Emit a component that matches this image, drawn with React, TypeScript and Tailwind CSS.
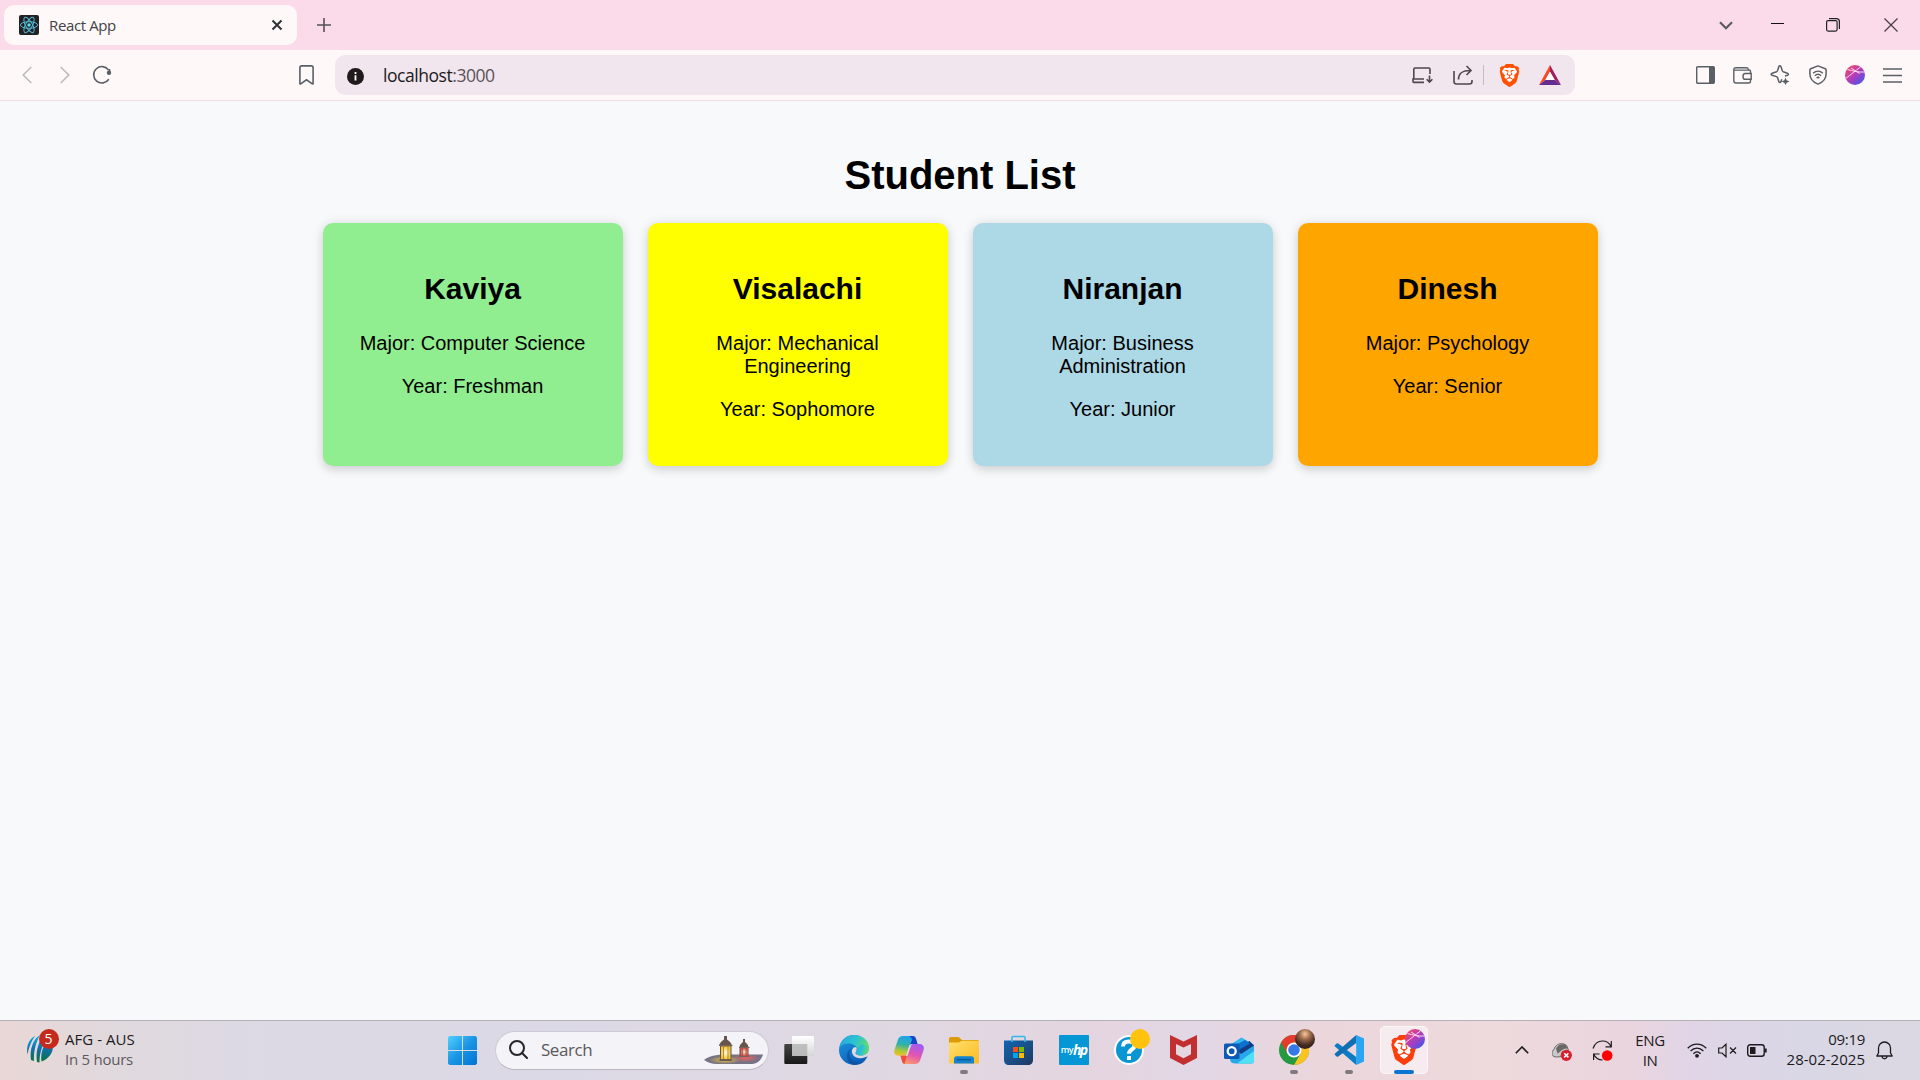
import React from "react";
import type { ReactNode } from "react";
import { SiBrave } from "react-icons/si";

const students = [
  { name: "Kaviya", major: "Computer Science", year: "Freshman", color: "bg-[#90ee90]" },
  { name: "Visalachi", major: "Mechanical Engineering", year: "Sophomore", color: "bg-[#ffff00]" },
  { name: "Niranjan", major: "Business Administration", year: "Junior", color: "bg-[#add8e6]" },
  { name: "Dinesh", major: "Psychology", year: "Senior", color: "bg-[#ffa500]" },
];

function Slot({ w, children }: { w: string; children?: ReactNode }) {
  return <div className={`flex h-full shrink-0 items-center justify-center ${w}`}>{children}</div>;
}

function ReactLogo() {
  return (
    <svg width="20" height="20" viewBox="0 0 20 20">
      <rect width="20" height="20" rx="2" fill="#222" />
      <g fill="none" stroke="#53b9d8" strokeWidth="1">
        <ellipse cx="10" cy="10" rx="8.6" ry="3.3" />
        <ellipse cx="10" cy="10" rx="8.6" ry="3.3" transform="rotate(60 10 10)" />
        <ellipse cx="10" cy="10" rx="8.6" ry="3.3" transform="rotate(120 10 10)" />
      </g>
      <circle cx="10" cy="10" r="1.7" fill="#61dafb" />
    </svg>
  );
}

function BraveLogo({ size, color = "#ff5000" }: { size: number; color?: string }) {
  return (
    <svg width={size} height={size} viewBox="0 0 24 24">
      <path d="M6 4h12l2 5-3 9-5 4-5-4-3-9z" fill="#fff" />
      <SiBrave size={24} color={color} />
    </svg>
  );
}

function Orb({ size }: { size: number }) {
  return (
    <svg width={size} height={size} viewBox="0 0 20 20">
      <defs>
        <linearGradient id="orb" x1="0.1" y1="0.1" x2="0.85" y2="0.9">
          <stop offset="0" stopColor="#f0486c" />
          <stop offset="0.5" stopColor="#b63cb8" />
          <stop offset="1" stopColor="#4a55e8" />
        </linearGradient>
      </defs>
      <circle cx="10" cy="10" r="10" fill="url(#orb)" />
      <path d="M2.500 4.500C8 6 13 7.500 19.600 7M.7 13.500C6 9.500 10 6 15.500 2M6 3l8.500 5.500" fill="none" stroke="#ffd9f4" strokeWidth="1" />
    </svg>
  );
}

function TabStrip() {
  return (
    <div className="flex h-[50px] items-center bg-[#fbdaea] pl-1">
      <div className="flex h-10 w-[293px] items-center rounded-[10px] bg-[#fff8f8] pl-[15px] pr-[14px]">
        <ReactLogo />
        <span className="mb-px ml-[10px] flex-1 text-[15px] leading-5 tracking-[-0.38px] text-[#404346]">React App</span>
        <svg width="12" height="12" viewBox="0 0 12 12" stroke="#2e3236" strokeWidth="2">
          <path d="M1.500 1.500l9 9M10.500 1.500l-9 9" />
        </svg>
      </div>
      <Slot w="w-[54px]">
        <svg width="14" height="14" viewBox="0 0 14 14" stroke="#55515a" strokeWidth="1.600">
          <path d="M7 0v14M0 7h14" />
        </svg>
      </Slot>
      <div className="flex-1" />
      <Slot w="w-[50px]">
        <svg width="14" height="9" viewBox="0 0 14 9" fill="none" stroke="#5c5961" strokeWidth="2.200">
          <path d="M1 1.200l6 6 6-6" />
        </svg>
      </Slot>
      <Slot w="w-[54px]">
        <span className="mb-[3px] mr-[2px] h-px w-[13px] bg-[#111]" />
      </Slot>
      <Slot w="w-[56px]">
        <svg width="14" height="14" viewBox="0 0 14 14" fill="none" stroke="#222">
          <rect x="0.600" y="2.600" width="10.500" height="10.500" rx="1.500" strokeWidth="1.200" />
          <path d="M3 .6h7.500a2.900 2.900 0 0 1 2.900 2.900V11" strokeWidth="1.200" />
        </svg>
      </Slot>
      <Slot w="w-[59px]">
        <svg width="14" height="14" viewBox="0 0 14 14" stroke="#4a3a44" strokeWidth="1.200">
          <path d="M.5.5l13 13M13.500.5l-13 13" />
        </svg>
      </Slot>
    </div>
  );
}

function Toolbar() {
  return (
    <div className="flex h-[51px] items-center border-b border-[#f3dbe2] bg-[#fff8f8]">
      <Slot w="w-[8px]" />
      <Slot w="w-[38px]">
        <svg width="10" height="18" viewBox="0 0 10 18" fill="none" stroke="#bcb8bb" strokeWidth="1.500">
          <path d="M9.300 1L1.200 9l8.100 8" />
        </svg>
      </Slot>
      <Slot w="w-[38px]">
        <svg width="10" height="18" viewBox="0 0 10 18" fill="none" stroke="#bcb8bb" strokeWidth="1.500">
          <path d="M.7 1l8.100 8-8.100 8" />
        </svg>
      </Slot>
      <Slot w="w-[36px]">
        <svg width="20" height="20" viewBox="0 0 20 20" fill="none" stroke="#5a5f66" strokeWidth="1.600">
          <path d="M16.800 14.200A8.200 8.200 0 1 1 16.600 5" />
          <circle cx="17" cy="7.800" r="2.200" fill="#5a5f66" stroke="none" />
          <path d="M17.500 4v4" />
        </svg>
      </Slot>
      <div className="w-[157px] shrink-0" />
      <Slot w="w-[58px]">
        <svg width="15" height="20" viewBox="0 0 15 20" fill="none" stroke="#5a5f66" strokeWidth="1.600">
          <path d="M.9 18.500V2.800c0-1.200.8-1.900 1.900-1.900h9.400c1.100 0 1.900.7 1.900 1.900v15.700c0 .5-.4.7-.8.4L7.500 14.800l-5.800 4.100c-.4.3-.8.1-.8-.4z" />
        </svg>
      </Slot>
      <div className="flex h-10 w-[1240px] shrink-0 items-center rounded-[10px] bg-[#f1e5ee]">
        <Slot w="w-[40px]">
          <svg className="mt-[2px]" width="17" height="17" viewBox="0 0 17 17">
            <circle cx="8.500" cy="8.500" r="8.500" fill="#201a1c" />
            <path d="M8.500 7.300v5.200M8.500 4v1.900" stroke="#fff" strokeWidth="1.800" />
          </svg>
        </Slot>
        <span className="mb-px ml-2 flex-1 text-[17.5px] leading-6 tracking-[-0.45px] text-[#201a1c]">
          localhost<span className="text-[#5c5358]">:3000</span>
        </span>
        <Slot w="w-[42px]">
          <svg width="21" height="17" viewBox="0 0 21 17" fill="none" stroke="#4f474c" strokeWidth="1.600">
            <path d="M18 7V2.200C18 1.500 17.500 1 16.800 1H3C2.300 1 1.800 1.500 1.800 2.200V12M12 12H1v2.600c0 .4.4.8.8.8H12M17.500 8.500v6.200M14.600 12.200l2.900 2.900 2.900-2.900" />
          </svg>
        </Slot>
        <Slot w="w-[40px]">
          <svg width="20" height="20" viewBox="0 0 20 20" fill="none" stroke="#4f474c" strokeWidth="1.600">
            <path d="M1 6v10.500C1 18 2 19 3.500 19h13c1.500 0 2.500-1 2.500-2.500V15M5.500 14.500C5.500 9 8 5.500 17.500 5.500M13.500 1l4.500 4.500-4.500 4.500" />
          </svg>
        </Slot>
        <span className="h-5 w-px bg-[#c3bac2]" />
        <Slot w="w-[50px]">
          <BraveLogo size={23} />
        </Slot>
        <Slot w="w-[32px]">
          <svg width="22" height="20" viewBox="0 0 22 20">
            <path d="M11 0v6.800L6.300 15 0 20z" fill="#ff4724" />
            <path d="M11 0v6.800l4.700 8.200L22 20z" fill="#9e1f63" />
            <path d="M0 20l6.300-5h9.400l6.300 5z" fill="#662d91" />
            <path d="M11 6.800L6.300 15h9.400z" fill="#fff" />
          </svg>
        </Slot>
        <Slot w="w-[9px]" />
      </div>
      <div className="flex-1" />
      <Slot w="w-[37px]">
        <svg width="19" height="18" viewBox="0 0 19 18">
          <rect x="0.700" y="0.700" width="17.600" height="16.600" rx="1" fill="none" stroke="#5a5f66" strokeWidth="1.400" />
          <path d="M13 1h5v16h-5z" fill="#5a5f66" />
        </svg>
      </Slot>
      <Slot w="w-[37px]">
        <svg width="19" height="17" viewBox="0 0 19 17" fill="none" stroke="#5a5f66" strokeWidth="1.400">
          <path d="M17.500 6V4.500c0-.9-.6-1.500-1.500-1.500H1M17.500 12.500V14c0 1.300-.8 2-2 2H3c-1.300 0-2.200-.8-2.200-2.200V3C.8 1.700 1.500.8 3 .8h10.500c1 0 1.700.5 1.700 1.400V3M18.200 6.500h-6c-1.500 0-2.200 1.200-2.200 2.900s.7 2.900 2.200 2.900h6z" />
          <path d="M1.500 1.500h13V3h-13z" fill="#b0afb4" stroke="none" />
        </svg>
      </Slot>
      <Slot w="w-[38px]">
        <svg width="20" height="20" viewBox="0 0 20 20" fill="none" stroke="#5a5f66" strokeWidth="1.500" strokeLinejoin="round">
          <path d="M11.700 14.200l-.7 2.300c-.4 1.300-1.800 1.300-2.200 0l-1.300-4c-.2-.5-.4-.7-.9-.9l-4.500-1.400c-1.300-.4-1.300-1.600 0-2l4.500-1.500c.5-.2.700-.4.9-.9l1.300-4c.4-1.300 1.800-1.300 2.200 0l1.300 4c.2.5.4.7.9.9l4.200 1.500c1.300.4 1.300 1.500 0 2l-2.400.8" />
          <path d="M15.500 12.500l1.200 2.800 2.900 1.200-2.900 1.200-1.200 2.300-1.200-2.300-2.900-1.200 2.900-1.200z" fill="#5a5f66" stroke="none" />
        </svg>
      </Slot>
      <Slot w="w-[38px]">
        <svg width="18" height="20" viewBox="0 0 18 20" fill="none" stroke="#5a5f66" strokeWidth="1.500">
          <path d="M9 .9l7.300 2.800c.5.200.8.5.8 1.100V9c0 5-3.200 8.200-8.100 10.100C4.100 17.200.9 14 .9 9V4.800c0-.6.3-.9.8-1.100z" strokeLinejoin="round" />
          <path d="M4.200 8.200c2.800-2.500 6.800-2.500 9.600 0M5.900 10.700c1.800-1.600 4.400-1.600 6.200 0M7.600 13c.8-.7 2-.7 2.800 0" />
        </svg>
      </Slot>
      <Slot w="w-[36px]">
        <Orb size={20} />
      </Slot>
      <Slot w="w-[38px]">
        <svg width="19" height="15" viewBox="0 0 19 15" stroke="#5a5f66" strokeWidth="1.600">
          <path d="M0 1h19M0 7.500h19M0 14h19" />
        </svg>
      </Slot>
      <Slot w="w-[9px]" />
    </div>
  );
}

function StudentPage() {
  return (
    <main className="flex flex-1 flex-col items-center bg-[#f8f9fb] pt-[51px] font-['Liberation_Sans',Arial,sans-serif] text-black">
      <h1 className="text-[40px] font-bold leading-[46px]">Student List</h1>
      <div className="mt-[25px] flex gap-[25px]">
        {students.map((s) => (
          <section
            key={s.name}
            className={`w-[300px] rounded-[10px] px-[25px] pb-[45px] pt-[49px] text-center shadow-[0_5px_10px_rgba(0,0,0,0.1),0_0_12px_rgba(0,0,0,0.1)] ${s.color}`}
          >
            <h2 className="text-[30px] font-bold leading-[34px]">{s.name}</h2>
            <p className="mt-[26px] text-[20px] leading-[23px]">{`Major: ${s.major}`}</p>
            <p className="mt-5 text-[20px] leading-[23px]">{`Year: ${s.year}`}</p>
          </section>
        ))}
      </div>
    </main>
  );
}

function WindowsLogo() {
  return (
    <svg width="29" height="29" viewBox="0 0 29 29">
      <defs>
        <linearGradient id="win" x1="0" y1="0" x2="29" y2="29" gradientUnits="userSpaceOnUse">
          <stop offset="0" stopColor="#4fd0ff" />
          <stop offset="0.500" stopColor="#1a94e4" />
          <stop offset="1" stopColor="#0074d4" />
        </linearGradient>
      </defs>
      <path d="M1.500 0H14v14H0V1.500zM15 0h12.500L29 1.500V14H15zM0 15h14v14H1.500L0 27.500zM15 15h14v12.500L27.500 29H15z" fill="url(#win)" />
    </svg>
  );
}

function Lanterns() {
  return (
    <svg width="60" height="29" viewBox="0 0 60 29">
      <defs>
        <radialGradient id="glowY"><stop offset="0" stopColor="#e8c23c" /><stop offset="1" stopColor="#e8c23c" stopOpacity="0" /></radialGradient>
        <radialGradient id="glowR"><stop offset="0" stopColor="#f06060" /><stop offset="1" stopColor="#f06060" stopOpacity="0" /></radialGradient>
        <radialGradient id="flameY"><stop offset="0" stopColor="#fffbe0" /><stop offset="1" stopColor="#f6c530" /></radialGradient>
        <radialGradient id="flameR"><stop offset="0" stopColor="#ffe9d0" /><stop offset="1" stopColor="#d34b4b" /></radialGradient>
      </defs>
      <path d="M0 24c5-4 12-5.500 22-5.500h37c-2 6-6 9.500-11 9.500H13C8 28 4 26.500 0 24z" fill="#777384" />
      <ellipse cx="21" cy="24" rx="16" ry="4" fill="url(#glowY)" />
      <ellipse cx="42" cy="22" rx="13" ry="4" fill="url(#glowR)" />
      <path d="M15 10c.5-3 2-4.500 5-6.500V0h3v3.500c3 2 4.500 3.500 5 6.500zM16 10h11.500v15H16zM35.500 11c.4-2.500 2-3.800 3.500-5V3h2v3c1.500 1.200 3 2.500 3.500 5v10h-9z" fill="#65554d" />
      <path d="M15.500 9.500h13M14.800 24h13.800M35 11.500h10.500M35 20.500h10.500" stroke="#7a6455" strokeWidth="1.200" />
      <rect x="17" y="10.500" width="9.500" height="12.500" fill="url(#flameY)" />
      <rect x="36.500" y="12" width="7.500" height="8" fill="url(#flameR)" />
      <path d="M19.500 11v12M24 11v12M38.500 12.500V20M42 12.500V20" stroke="#7a5a2c" strokeWidth=".6" />
    </svg>
  );
}

function TaskView() {
  return (
    <svg width="30" height="30" viewBox="0 0 30 30">
      <defs>
        <linearGradient id="tv" x2="0" y2="1"><stop offset="0" stopColor="#454545" /><stop offset="1" stopColor="#181818" /></linearGradient>
        <linearGradient id="tvw" x2="0" y2="1"><stop offset="0" stopColor="#fff" /><stop offset="1" stopColor="#d5d5d5" /></linearGradient>
      </defs>
      <rect x="0.300" y="9" width="23" height="20" rx="1" fill="url(#tv)" />
      <rect x="8" y="1" width="22" height="20" rx="1" fill="url(#tvw)" />
      <path d="M8 9h15.300v12H8z" fill="#b3b3b3" opacity=".8" />
    </svg>
  );
}

function Edge() {
  return (
    <svg width="30" height="30" viewBox="0 0 30 30">
      <defs>
        <linearGradient id="e1" x1="0" y1=".3" x2="1" y2=".6"><stop offset="0" stopColor="#27a9e1" /><stop offset=".5" stopColor="#2cc4cf" /><stop offset="1" stopColor="#6ae05c" /></linearGradient>
        <linearGradient id="e2" x1="0" y1="0" x2=".6" y2="1"><stop offset="0" stopColor="#1f9de0" /><stop offset="1" stopColor="#0a5bb8" /></linearGradient>
      </defs>
      <circle cx="15" cy="15" r="15" fill="url(#e2)" />
      <path d="M.5 12C2 4.500 8 0 15 0c9 0 15 6 15 12.500 0 5-3.500 8-8.200 8-3.200 0-5.200-1-5.200-2.500 0-1 1.200-1.500 1.200-4 0-3-3.800-5.500-8-5.500C6 8.500 2.500 9.500.5 12z" fill="url(#e1)" />
      <path d="M10.500 17.500C10 23 14 27 19 27.500c4 .4 7-1.500 8.500-4.500C25 29 19.500 30 16 30 9 29.500 7 22.500 8.500 18c1-3 3.500-4.700 6-5-2.200 1-3.700 2.200-4 4.500z" fill="#0d4f9f" opacity=".75" />
      <path d="M16 12c-2 .5-3.500 2.500-3 5.500.7 4 5 6 9 5.700 2.500-.2 4.500-1 6-2-1 1.500-.5 1.500 1.800-.7L31 12l-1-.5c.5 6-3.500 9-8.200 9-3.200 0-5.200-1-5.200-2.500 0-1 1.200-1.500 1.200-4 0-.8-.8-1.700-1.800-2z" fill="#dfd8e2" />
      <path d="M30 12.500c0 5-3.500 8-8.200 8-3.200 0-5.200-1-5.200-2.500 0-1 1.200-1.500 1.200-4l5-5z" fill="url(#e1)" />
    </svg>
  );
}

function Copilot() {
  return (
    <svg width="30" height="28" viewBox="0 0 30 28">
      <defs>
        <linearGradient id="c1" x1=".5" y1="0" x2=".3" y2="1"><stop offset="0" stopColor="#1da3f0" /><stop offset=".45" stopColor="#33b2a6" /><stop offset=".75" stopColor="#a8c83c" /><stop offset="1" stopColor="#f0c02c" /></linearGradient>
        <linearGradient id="c2" x1=".7" y1="0" x2=".3" y2="1"><stop offset="0" stopColor="#a05cf4" /><stop offset=".5" stopColor="#e054b4" /><stop offset="1" stopColor="#fb9a6c" /></linearGradient>
      </defs>
      <path d="M9 0h9.500c2 0 3 1 3.500 3l1.500 5h-5c-2 0-2.600 1-3.200 3l-2 6.500c-.6 1.500-1.500 2.200-3 2.200H4.500c-3.500 0-5-2.500-4-6L4 3.500C4.700 1.200 6.500 0 9 0z" fill="url(#c1)" />
      <path d="M14 0h4.500c2 0 3 1 3.500 3l1.500 5h-5c-1.500 0-2.300.5-2.800 1.500L18 4c-.5-2-1.500-4-4-4z" fill="#1846c8" />
      <path d="M21 28h-9.500c-2 0-3-1-3.500-3l-1.500-5.300h4c1.500 0 2.500-.7 3-2.200l2.200-6.800c.6-1.800 1.300-2.700 3.200-2.700h6.500c3.500 0 5.200 2.500 4.200 6L26 24.500c-.7 2.300-2.500 3.500-5 3.500z" fill="url(#c2)" />
      <path d="M6.500 19.700h4c1 0 2-.3 2.500-1L10.500 28C9 27.500 8.300 26 8 25z" fill="#ee4c38" />
      <path d="M17.500 8.300c-1.700.3-2.200 1-2.700 2.700l-2.300 7c-.3 1-.8 1.500-1.500 1.700h2.500l3.300-9.500c.3-1 .7-1.500 1.700-1.900z" fill="#e5dbe6" />
    </svg>
  );
}

function Explorer() {
  return (
    <svg width="30" height="27" viewBox="0 0 30 27">
      <defs><linearGradient id="fo" x1="0" y1="0" x2="1" y2="1"><stop offset="0" stopColor="#ffe06e" /><stop offset="1" stopColor="#fbba22" /></linearGradient></defs>
      <path d="M0 2C0 .7.7 0 2 0h7c2 0 2.500 3 4.500 3H28c1.300 0 2 .5 2 1.500V8H0z" fill="#dc9b08" />
      <path d="M0 5.500h9c2 0 2.500-1.800 4.500-1.800H30V26.500H0z" fill="url(#fo)" />
      <path d="M5 26.500V22c0-1.800 1-2.800 2.700-2.800h14.600c1.700 0 2.700 1 2.700 2.800v4.500z" fill="#1482d0" />
      <path d="M8 22.700h14" stroke="#08558f" strokeWidth="1.200" />
    </svg>
  );
}

function Store() {
  return (
    <svg width="29" height="30" viewBox="0 0 29 30">
      <defs><linearGradient id="st" x1="0" y1="0" x2="1" y2="1"><stop offset="0" stopColor="#1067b2" /><stop offset="1" stopColor="#223860" /></linearGradient></defs>
      <path d="M0 5.500h29V25c0 3-2 5-5 5H5c-3 0-5-2-5-5z" fill="url(#st)" />
      <path d="M8 7V2.500C8 1.700 8.500 1.500 9 1.500h11c.6 0 1 .2 1 1V7" fill="none" stroke="#35b8ee" strokeWidth="1.600" />
      <path d="M9 12h5v5H9z" fill="#f25022" /><path d="M15 12h5v5h-5z" fill="#7fba00" /><path d="M9 18h5v5H9z" fill="#00a4ef" /><path d="M15 18h5v5h-5z" fill="#ffb900" />
    </svg>
  );
}

function Help() {
  return (
    <div className="relative flex size-[30px] items-center justify-center rounded-full border-2 border-white bg-[#0a96d2]">
      <svg width="18" height="22" viewBox="0 0 18 22" fill="none" stroke="#fff" strokeWidth="4">
        <path d="M3 7.500C3 4 5.500 2.500 8.800 2.500c3.500 0 5.700 1.600 5.700 4.200 0 3.800-5.500 3.800-5.500 8M9 17v4" />
      </svg>
      <span className="absolute -right-[8px] -top-[8px] size-5 rounded-full bg-[#ffc20e]" />
    </div>
  );
}

function McAfee() {
  return (
    <svg width="27" height="30" viewBox="0 0 27 30">
      <path d="M0 0l13.500 6.500L27 0v23L13.500 30 0 23z" fill="#c22f31" />
      <path d="M6 9l7.500 3.500L21 9v10.300l-7.500 4-7.500-4z" fill="#e5d7df" />
    </svg>
  );
}

function Outlook() {
  return (
    <svg width="30" height="27" viewBox="0 0 30 27">
      <path d="M6 8L17.500.5 30 8v16c0 1.500-1 2.500-2.500 2.500h-16C8 26.500 6 25 6 22z" fill="#28a8ea" />
      <path d="M8 7l9.500-6 6 4L14 12z" fill="#35b8f1" />
      <path d="M12 12L25.500 4l4.500 4.500L17 17z" fill="#123b82" />
      <path d="M10 9l11-6 5 3.500L13 14z" fill="#0c71cf" />
      <path d="M13 26.500L30 14v10c0 1.500-1 2.500-2.500 2.500z" fill="#4fe0f4" />
      <rect y="6.500" width="15.500" height="15.500" rx="1.500" fill="#0c59b7" />
      <circle cx="7.700" cy="14.200" r="4" fill="none" stroke="#fff" strokeWidth="2.300" />
    </svg>
  );
}

function Chrome() {
  return (
    <div className="relative size-[30px]">
      <svg width="30" height="30" viewBox="0 0 30 30">
        <circle cx="15" cy="15" r="15" fill="#269a43" />
        <path d="M2 7.500A15 15 0 0 1 28 7.500H15L8.500 18.700z" fill="#e33b2e" />
        <path d="M28 7.500A15 15 0 0 1 15 30l6.500-11.200L15 7.500z" fill="#fcc31e" />
        <circle cx="15" cy="15" r="7.500" fill="#fff" />
        <circle cx="15" cy="15" r="5.800" fill="#3579e8" />
      </svg>
      <span className="absolute -right-[6px] -top-[6px] size-5 rounded-full bg-[radial-gradient(circle_at_50%_25%,#f5c9a0_0%,#9d6a4b_30%,#442a22_62%,#2b1a16_100%)]" />
    </div>
  );
}

function VsCode() {
  return (
    <svg width="30" height="30" viewBox="0 0 30 30">
      <path d="M22.200 0L30 3.500v23L22.200 30z" fill="#2aa5f3" />
      <path d="M22.200 30L1 11.500a1 1 0 0 1 0-1.500l1.600-1.500a1.300 1.300 0 0 1 1.700 0L22.200 22z" fill="#0b7dc5" />
      <path d="M22.200 0L1 18.500a1 1 0 0 0 0 1.500l1.600 1.500a1.300 1.300 0 0 0 1.700 0L22.200 8z" fill="#1070b3" />
    </svg>
  );
}

function TaskItem({ children, dot }: { children: ReactNode; dot?: boolean }) {
  return (
    <div className="relative flex h-full w-[55px] shrink-0 items-center justify-center">
      {children}
      {dot && <span className="absolute bottom-[5px] h-1 w-2 rounded-full bg-[#807a80]" />}
    </div>
  );
}

function Taskbar() {
  return (
    <footer className="flex h-[60px] shrink-0 items-center border-t border-[#b5afb6] bg-[linear-gradient(90deg,#e9d7d6_0%,#e0d9dd_6%,#dcd9e5_14%,#dcd9e6_30%,#dfd8e2_46%,#e4d5e0_58%,#e2d7e5_62%,#ebd6dc_69%,#eed9dc_78%,#ead5df_85%,#e0d5e6_88%,#d9d7e6_94%,#dcd8e2_100%)] pb-px">
      <div className="relative mb-[3px] ml-[26px] size-7">
        <svg width="27" height="28" viewBox="0 0 27 28">
          <defs><linearGradient id="icc" x1=".4" y1="0" x2=".4" y2="1"><stop offset="0" stopColor="#00aeea" /><stop offset=".5" stopColor="#1170ad" /><stop offset="1" stopColor="#07723c" /></linearGradient></defs>
          <path d="M9 1C3 4 0 11 1.500 19.500 3 12 5 7 9 1zM14 0C6.500 5 3.500 15 5 25l3 1C7.500 17 9.500 8 14 0zM17 1c-5 7-7.500 16-6 26l2.500.5C13.500 19 15.500 12 20 4zM21 6c-4.500 6-6.500 13-5.500 20.500C22 24 27 19 27 11z" fill="url(#icc)" />
        </svg>
        <span className="absolute -top-[6px] left-[12.5px] flex size-5 items-center justify-center rounded-full bg-[#c42b1c] text-[14px] leading-none text-white">5</span>
      </div>
      <div className="mb-[3px] ml-[11px] flex flex-1 flex-col whitespace-nowrap text-[15px] leading-5">
        <span className="tracking-[0.05px] text-[#1c1b1d]">AFG - AUS</span>
        <span className="tracking-[-0.25px] text-[#5c595d]">In 5 hours</span>
      </div>
      <Slot w="w-[65px]">
        <WindowsLogo />
      </Slot>
      <div className="flex h-[39px] w-[274px] shrink-0 items-center rounded-full border border-[#cfc9d6] border-b-[#bdb7c3] bg-[#f4f3f7] pl-[13px] pr-1">
        <svg className="mb-px" width="19" height="19" viewBox="0 0 19 19" fill="none" stroke="#26262a" strokeWidth="2" strokeLinecap="round">
          <circle cx="8" cy="8" r="7" />
          <path d="M13 13l5 5" />
        </svg>
        <span className="ml-[13px] flex-1 text-[17px] leading-6 tracking-[-0.45px] text-[#5b595d]">Search</span>
        <Lanterns />
      </div>
      <Slot w="w-[2px]" />
      <TaskItem><TaskView /></TaskItem>
      <TaskItem><Edge /></TaskItem>
      <TaskItem><Copilot /></TaskItem>
      <TaskItem dot><Explorer /></TaskItem>
      <TaskItem><Store /></TaskItem>
      <TaskItem>
        <div className="flex size-[30px] items-center justify-center rounded-[1px] bg-[#0596d5] text-white">
          <span className="text-[9px] font-semibold tracking-[-0.5px]">my</span>
          <span className="text-[14px] font-bold italic leading-none tracking-[-1.8px]">hp</span>
        </div>
      </TaskItem>
      <TaskItem><Help /></TaskItem>
      <TaskItem><McAfee /></TaskItem>
      <TaskItem><Outlook /></TaskItem>
      <TaskItem dot><Chrome /></TaskItem>
      <TaskItem dot><VsCode /></TaskItem>
      <TaskItem>
        <div className="relative flex size-12 items-center justify-center rounded-[5px] border border-white/60 bg-[#f6ebee]">
          <BraveLogo size={30} color="#fb3f0c" />
          <span className="absolute right-[2px] top-[2px]"><Orb size={20} /></span>
          <span className="absolute -bottom-px h-1 w-5 rounded-full bg-[#0b76d2]" />
        </div>
      </TaskItem>
      <div className="w-[71px] shrink-0" />
      <Slot w="w-[40px]">
        <svg width="14" height="8" viewBox="0 0 14 8" fill="none" stroke="#1c1b1d" strokeWidth="1.600"><path d="M.8 7.200L7 1l6.200 6.200" /></svg>
      </Slot>
      <Slot w="w-[40px]">
        <svg className="mt-[3px]" width="20" height="18" viewBox="0 0 20 18">
          <path d="M4.500 14A4 4 0 0 1 2 6.500C3 2.500 7 0 11 .8c3 .5 4.500 2.300 5 5.200l1 7z" fill="#c9c7c7" stroke="#666" />
          <path d="M4 5.500C6 1 11 .3 14 2l1.500 3.500c-5-.5-7 3.500-10 5z" fill="#6b6968" />
          <circle cx="14.300" cy="12.300" r="5.600" fill="#d81f2c" />
          <path d="M12.200 10.200l4.200 4.200M16.400 10.200l-4.200 4.200" stroke="#fff" strokeWidth="1.500" />
        </svg>
      </Slot>
      <Slot w="w-[40px]">
        <svg width="21" height="21" viewBox="0 0 21 21" fill="none" stroke="#1c1b1d" strokeWidth="1.200">
          <path d="M1 8.500C3 2.500 7 1 10.500 1c4 0 7 2.200 8.500 5.500M19.300 1v5.800h-5.800M1.600 20v-6h6M1.600 14c1.800 4 5 6 9 6" />
          <circle cx="15.200" cy="15.500" r="5.300" fill="#f00" stroke="none" />
        </svg>
      </Slot>
      <div className="mb-px flex w-14 shrink-0 flex-col items-center text-[15px] leading-5 tracking-[-0.4px] text-[#1c1b1d]">
        <span>ENG</span>
        <span>IN</span>
      </div>
      <Slot w="w-[4px]" />
      <Slot w="w-[30px]">
        <svg width="20" height="15" viewBox="0 0 20 15" fill="none" stroke="#1c1b1d" strokeWidth="1.300">
          <path d="M.7 5.200c5.400-5.500 13.200-5.500 18.600 0M3.600 8c3.800-3.800 9-3.800 12.800 0M6.400 10.700c2.200-2.200 5-2.200 7.200 0" />
          <circle cx="10" cy="12.800" r="1.900" fill="#1c1b1d" stroke="none" />
        </svg>
      </Slot>
      <Slot w="w-[30px]">
        <svg width="19" height="15" viewBox="0 0 19 15" fill="none" stroke="#1c1b1d" strokeWidth="1.200">
          <path d="M.7 5v5h3.300l4 3.800V1.200L4 5zM12 4.500l6 6M18 4.500l-6 6" />
        </svg>
      </Slot>
      <Slot w="w-[30px]">
        <svg width="20" height="13" viewBox="0 0 20 13" fill="none" stroke="#1c1b1d" strokeWidth="1.400">
          <rect x=".7" y=".7" width="16.500" height="11.600" rx="2.500" />
          <path d="M3 3h5.500v7H3z" fill="#1c1b1d" stroke="none" />
          <path d="M18.700 4.500v4" strokeWidth="2" />
        </svg>
      </Slot>
      <div className="mb-[3px] flex w-[93px] shrink-0 flex-col items-end text-[15px] leading-5 text-[#1c1b1d]">
        <span className="tracking-[-0.3px]">09:19</span>
        <span className="tracking-[0.02px]">28-02-2025</span>
      </div>
      <Slot w="w-[38px]">
        <svg width="17" height="19" viewBox="0 0 17 19" fill="none" stroke="#1c1b1d" strokeWidth="1.300" strokeLinejoin="round">
          <path d="M2.500 12V7a6 6 0 0 1 12 0v5l1.700 3H.8zM6 15.500c.5 3 4.500 3 5 0" />
        </svg>
      </Slot>
      <div className="w-[17px] shrink-0" />
    </footer>
  );
}

export default function App() {
  return (
    <div className="flex h-[1080px] w-[1920px] flex-col overflow-hidden font-['Open_Sans','Noto_Sans',sans-serif]">
      <TabStrip />
      <Toolbar />
      <StudentPage />
      <Taskbar />
    </div>
  );
}
